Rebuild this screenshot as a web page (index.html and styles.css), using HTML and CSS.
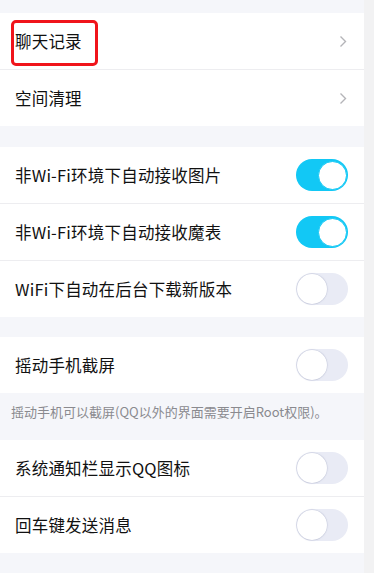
FILE: index.html
```html
<!DOCTYPE html>
<html lang="zh">
<head>
<meta charset="utf-8">
<link rel="stylesheet" href="styles.css">
</head>
<body>
<div class="page">
  <div class="main">
    <div class="group">
      <div class="row">
        <span class="label">聊天记录</span>
        <svg class="chev" width="8" height="13" viewBox="0 0 8 13"><path d="M1.5 1.5 L6.5 6.5 L1.5 11.5" fill="none" stroke="#b4b4b8" stroke-width="1.4"/></svg>
        <div class="mark"></div>
      </div>
      <div class="row">
        <span class="label">空间清理</span>
        <svg class="chev" width="8" height="13" viewBox="0 0 8 13"><path d="M1.5 1.5 L6.5 6.5 L1.5 11.5" fill="none" stroke="#b4b4b8" stroke-width="1.4"/></svg>
      </div>
    </div>
    <div class="group">
      <div class="row"><span class="label">非Wi-Fi环境下自动接收图片</span><span class="toggle on"><span class="knob"></span></span></div>
      <div class="row"><span class="label">非Wi-Fi环境下自动接收魔表</span><span class="toggle on"><span class="knob"></span></span></div>
      <div class="row"><span class="label">WiFi下自动在后台下载新版本</span><span class="toggle"><span class="knob"></span></span></div>
    </div>
    <div class="group g3">
      <div class="row"><span class="label">摇动手机截屏</span><span class="toggle"><span class="knob"></span></span></div>
    </div>
    <div class="note">摇动手机可以截屏(QQ以外的界面需要开启Root权限)。</div>
    <div class="group g4">
      <div class="row"><span class="label">系统通知栏显示QQ图标</span><span class="toggle"><span class="knob"></span></span></div>
      <div class="row"><span class="label">回车键发送消息</span><span class="toggle"><span class="knob"></span></span></div>
    </div>
  </div>
  <div class="side"></div>
</div>
</body>
</html>
```
FILE: styles.css
```css
html, body {
  margin: 0;
  padding: 0;
  background: #f5f6fa;
  font-family: "Noto Sans CJK SC", "Noto Sans", sans-serif;
}
.page {
  display: flex;
  width: 374px;
  height: 573px;
  overflow: hidden;
}
.main {
  width: 364px;
  padding-top: 13px;
  display: flex;
  flex-direction: column;
  gap: 21px;
}
.side {
  flex: 1;
  background: #f2f2f3;
}
.group {
  background: #fff;
}
.row {
  position: relative;
  height: 56px;
  display: flex;
  align-items: center;
  justify-content: space-between;
  padding: 0 16px 0 15px;
  box-sizing: border-box;
}
.row + .row {
  border-top: 1px solid #ededf0;
  height: 57px;
}
.label {
  font-size: 16.5px;
  color: #111;
  letter-spacing: 0.2px;
}
.chev {
  margin-right: 1px;
}
.mark {
  position: absolute;
  left: 11px;
  top: 7px;
  width: 87px;
  height: 46px;
  border: 3px solid #f0141b;
  border-radius: 5px;
  box-sizing: border-box;
}
.toggle {
  width: 52px;
  height: 32px;
  border-radius: 16px;
  background: #e9ebf5;
  position: relative;
  display: flex;
  align-items: center;
  padding: 1px;
  box-sizing: border-box;
}
.toggle .knob {
  width: 30px;
  height: 30px;
  border-radius: 50%;
  background: #fff;
  box-shadow: 0 0 1px 0.5px rgba(170,175,200,0.6);
}
.toggle.on {
  background: #12c8f5;
  justify-content: flex-end;
}
.toggle.on .knob {
  box-shadow: none;
  border: 1px solid #12c8f5;
  width: 29px;
  height: 29px;
  box-sizing: border-box;
  margin-right: 0;
}
.g3 {
  margin-top: -1px;
}
.note {
  margin-top: -21px;
  height: 47px;
  box-sizing: border-box;
  padding: 9px 0 0 11px;
  font-size: 13px;
  color: #8a8a8f;
  margin-bottom: -21px;
}
```
